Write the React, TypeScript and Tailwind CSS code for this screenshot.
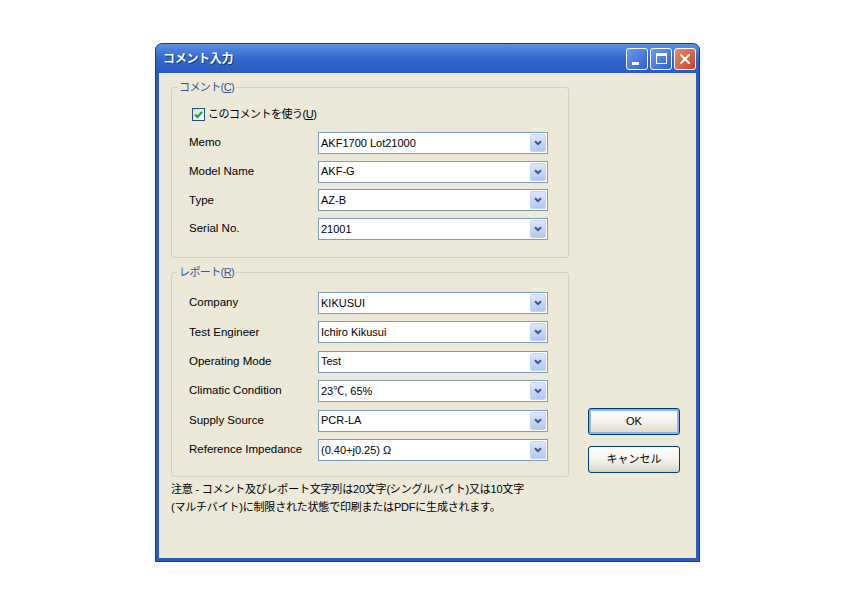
import React from "react";

const UI = "font-['Liberation_Sans','Noto_Sans_CJK_JP',sans-serif]";

function Chevron() {
  return (
    <svg width="8" height="6" viewBox="0 0 8 6">
      <path d="M1 1.2 L4 4.2 L7 1.2" fill="none" stroke="#3F5580" strokeWidth="2" />
    </svg>
  );
}

function Combo({ value }: { value: string }) {
  return (
    <div className="flex h-[22px] w-[230px] items-center border border-[#7F9DB9] bg-white">
      <span className="flex-1 truncate pl-[2px] text-[11px] leading-none text-black">{value}</span>
      <div className="mr-[1px] flex h-[18px] w-[16px] items-center justify-center rounded-[2px] border border-[#C3D3F5] bg-gradient-to-b from-[#DCE6FC] to-[#B3C7F1]">
        <Chevron />
      </div>
    </div>
  );
}

function Row({ label, value }: { label: string; value: string }) {
  return (
    <div className="flex h-[22px] items-center">
      <span className="w-[129px] text-[11.5px] leading-none text-black">{label}</span>
      <Combo value={value} />
    </div>
  );
}

function Group({
  title,
  hotkey,
  children,
  className,
}: {
  title: string;
  hotkey: string;
  children: React.ReactNode;
  className: string;
}) {
  return (
    <fieldset className={`rounded-[3px] border border-[#D3D0BE] pl-[17px] ${className}`}>
      <legend className="ml-[-12px] px-[2px] text-[11px] leading-[15px] tracking-[-0.6px] text-[#35529A]">
        {title}(<span className="underline">{hotkey}</span>)
      </legend>
      {children}
    </fieldset>
  );
}

function XpButton({ children, focused }: { children: React.ReactNode; focused?: boolean }) {
  return (
    <button
      className={`flex h-[27px] w-[92px] items-center justify-center rounded-[3px] border border-[#003C74] bg-gradient-to-b from-[#FFFFFF] via-[#F4F3EE] to-[#DCD9CB] text-[11px] text-black ${
        focused ? "shadow-[inset_0_0_0_2px_#8FB1EC]" : "shadow-[inset_0_-2px_0_#D6D0C5]"
      }`}
    >
      {children}
    </button>
  );
}

export default function App() {
  const comment = [
    ["Memo", "AKF1700 Lot21000"],
    ["Model Name", "AKF-G"],
    ["Type", "AZ-B"],
    ["Serial No.", "21001"],
  ];
  const report = [
    ["Company", "KIKUSUI"],
    ["Test Engineer", "Ichiro Kikusui"],
    ["Operating Mode", "Test"],
    ["Climatic Condition", "23℃, 65%"],
    ["Supply Source", "PCR-LA"],
    ["Reference Impedance", "(0.40+j0.25) Ω"],
  ];

  return (
    <div className={`h-[600px] w-[850px] bg-white pl-[155px] pt-[43px] ${UI}`}>
      <div className="flex h-[519px] w-[545px] flex-col rounded-t-[7px] border border-[#1B3A86] bg-[#2D5CC0]">
        {/* title bar */}
        <div className="flex h-[29px] items-center rounded-t-[6px] bg-gradient-to-b from-[#5E8FE4] via-[#3467CB] to-[#2B5BC0] pl-[7px] pr-[3px]">
          <span className="flex-1 text-[12px] font-bold tracking-[-0.3px] text-white [text-shadow:1px_1px_0_#10307A]">
            コメント入力
          </span>
          <div className="flex gap-[2px]">
            <div className="flex h-[22px] w-[22px] items-end justify-start rounded-[3px] border border-white bg-gradient-to-br from-[#6E9BF0] to-[#2D5FCF] pb-[4px] pl-[5px]">
              <div className="h-[3px] w-[7px] bg-white" />
            </div>
            <div className="flex h-[22px] w-[22px] items-center justify-center rounded-[3px] border border-white bg-gradient-to-br from-[#6E9BF0] to-[#2D5FCF]">
              <div className="h-[11px] w-[11px] border border-t-[3px] border-white" />
            </div>
            <div className="flex h-[22px] w-[22px] items-center justify-center rounded-[3px] border border-white bg-gradient-to-br from-[#EB8A6B] to-[#C8412A]">
              <svg width="12" height="12" viewBox="0 0 12 12">
                <path d="M2 2 L10 10 M10 2 L2 10" stroke="white" strokeWidth="2" strokeLinecap="round" />
              </svg>
            </div>
          </div>
        </div>

        {/* client area */}
        <div className="mx-[3px] mb-[3px] flex flex-1 flex-col bg-[#ECE9D8] pl-[12px] text-black">
          <div className="flex">
            <div className="flex w-[398px] flex-col">
              <Group title="コメント" hotkey="C" className="mt-[7px] pb-[17px] pt-[11px]">
                <div className="ml-[3px] flex h-[16px] items-center gap-[3px]">
                  <div className="flex h-[13px] w-[13px] items-center justify-center border border-[#1C5180] bg-gradient-to-br from-[#DCDCD7] to-white">
                    <svg width="9" height="9" viewBox="0 0 9 9">
                      <path d="M1 4.5 L3.5 7 L8 1.8" fill="none" stroke="#21A121" strokeWidth="2" />
                    </svg>
                  </div>
                  <span className="text-[11px] tracking-[-0.5px]">
                    このコメントを使う(<span className="underline">U</span>)
                  </span>
                </div>
                <div className="mt-[10px] flex flex-col gap-[6.7px]">
                  {comment.map(([l, v]) => (
                    <Row key={l} label={l} value={v} />
                  ))}
                </div>
              </Group>
              <Group title="レポート" hotkey="R" className="mt-[7px] pb-[15px] pt-[12px]">
                <div className="flex flex-col gap-[7.4px]">
                  {report.map(([l, v]) => (
                    <Row key={l} label={l} value={v} />
                  ))}
                </div>
              </Group>
            </div>
            <div className="ml-[19px] flex flex-col justify-end gap-[11px] pb-[4px]">
              <XpButton focused>OK</XpButton>
              <XpButton>キャンセル</XpButton>
            </div>
          </div>
          <p className="mt-[3px] text-[11px] leading-[18px] tracking-[-0.2px]">
            注意 - コメント及びレポート文字列は20文字(シングルバイト)又は10文字
            <br />
            (マルチバイト)に制限された状態で印刷またはPDFに生成されます。
          </p>
        </div>
      </div>
    </div>
  );
}
